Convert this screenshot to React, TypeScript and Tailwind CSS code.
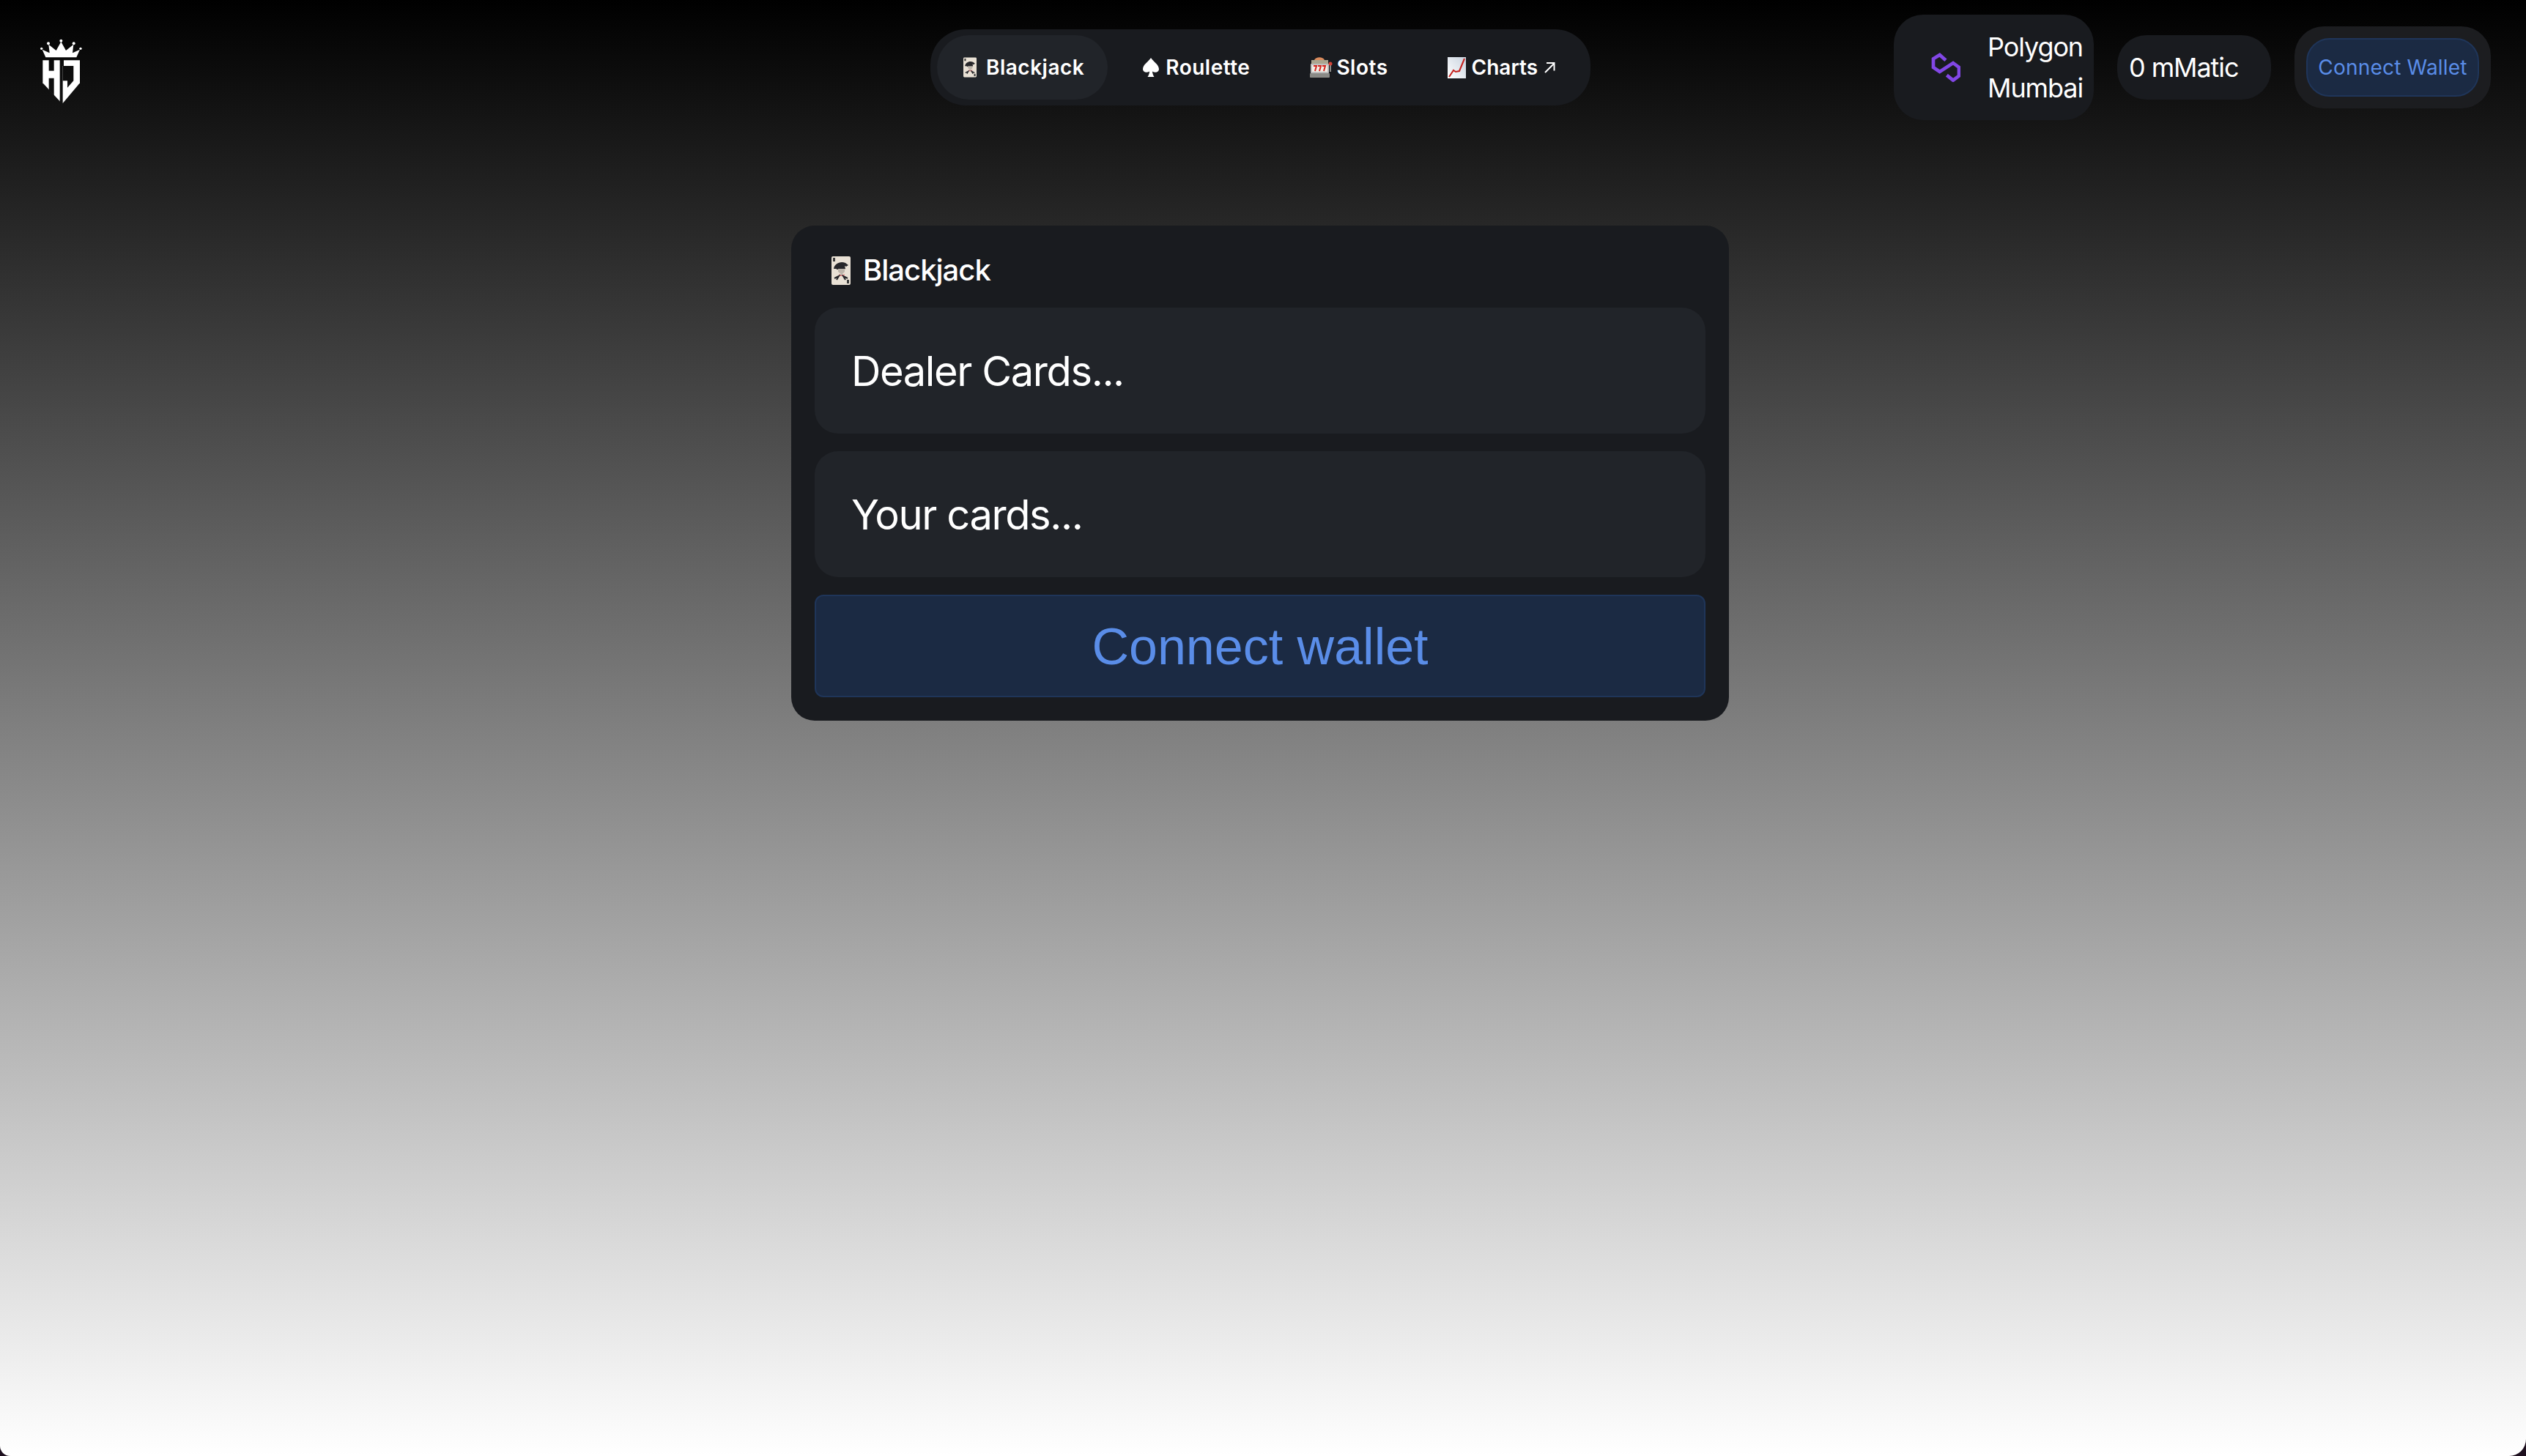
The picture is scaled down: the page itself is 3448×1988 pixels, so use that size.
const inter = "font-['Inter',sans-serif]";

function Logo() {
  return (
    <svg viewBox="0 0 225 315" className="w-[75px] h-[105px] mt-[10px] ml-[4px]">
      <mask id="hj">
        <polygon points="40,112 192,112 192,205 122,288 118,288 40,205" fill="white" />
        <rect x="65" y="108" width="21" height="47" fill="black" />
        <polygon points="65,185 86,185 86,256 65,234" fill="black" />
        <polygon points="110,108 126,108 126,135 122,135 122,295 110,295" fill="black" />
        <polygon points="122,135 166,135 166,196 141,224 141,196 122,196" fill="black" />
      </mask>
      <rect width="225" height="315" fill="white" mask="url(#hj)" />
      <polygon points="52,100 38,68 68,82 64,47 95,72 115,36 135,72 166,47 162,82 192,68 178,100" fill="white" />
      <circle cx="35" cy="64" r="5" fill="white" />
      <circle cx="63" cy="43" r="6" fill="white" />
      <circle cx="115" cy="32" r="6" fill="white" />
      <circle cx="167" cy="43" r="6" fill="white" />
      <circle cx="195" cy="64" r="5" fill="white" />
    </svg>
  );
}

function Joker({ className }: { className: string }) {
  return (
    <svg viewBox="0 0 26 39" className={className}>
      <rect width="26" height="39" rx="2" fill="#e9e1d5" />
      <path d="M2 2h3v5H2zM21 32h3v5h-3z" fill="#3a3a3a" />
      <path d="M3 17c1-7 9-11 16-8l4 3-3 2-2-1 1 4-2 1H8l-2-1z" fill="#26262a" />
      <path d="M9 17h9v4l-4 4-5-4z" fill="#bdb5ab" />
      <path d="M10 24l4 2 4-2-1 3h-6z" fill="#e5787a" />
      <path d="M4 30l6-3-3 5M22 30l-6-3 3 5" stroke="#26262a" strokeWidth="2" fill="none" />
    </svg>
  );
}

function Spade() {
  return (
    <svg viewBox="0 0 24 26" className="w-[24px] h-[26px] shrink-0">
      <path d="M12 0C9 5 1 9 1 15.500C1 19.500 6 21 10 18.500C10 21 9 23.500 7.500 26H16.500C15 23.500 14 21 14 18.500C18 21 23 19.500 23 15.500C23 9 15 5 12 0Z" fill="white" />
    </svg>
  );
}

function SlotMachine() {
  return (
    <svg viewBox="0 0 32 32" className="w-[32px] h-[32px] shrink-0">
      <path d="M7 6c2-5 12-5 14 0z" fill="#d98a5c" />
      <rect x="3" y="6" width="23" height="6" fill="#a9a58f" />
      <rect x="2" y="11" width="25" height="13" rx="1" fill="#bfbfbf" />
      <rect x="4" y="13" width="21" height="9" fill="#f3eee6" />
      <path d="M6 14h4l-2 7M12 14h4l-2 7M18 14h4l-2 7" stroke="#d3261f" strokeWidth="2" fill="none" />
      <rect x="1" y="24" width="27" height="6" rx="1" fill="#8a8a86" />
      <rect x="28" y="12" width="2" height="10" fill="#8a8a86" />
      <circle cx="29" cy="11" r="2.500" fill="#d3453a" />
    </svg>
  );
}

function ChartUp() {
  return (
    <svg viewBox="0 0 25 29" className="w-[25px] h-[29px] shrink-0 ml-[1px]">
      <defs>
        <linearGradient id="chartbg" x1="0" y1="1" x2="1" y2="0">
          <stop offset="0" stopColor="#ffffff" />
          <stop offset="1" stopColor="#c9d3df" />
        </linearGradient>
      </defs>
      <rect width="25" height="29" fill="url(#chartbg)" />
      <path d="M2 27L8 18L11 20L16 19L23 2" stroke="#c4201c" strokeWidth="2" fill="none" />
    </svg>
  );
}

function PolygonIcon() {
  return (
    <svg viewBox="45 35 120 120" className="w-[40px] h-[40px] shrink-0">
      <path
        d="M105 66L80 44L54 60V95L80 113L135 77L159 95V130L135 148L109 127"
        stroke="#8247e5"
        strokeWidth="14"
        fill="none"
      />
    </svg>
  );
}

function NavBar() {
  return (
    <nav className="flex items-center gap-[16px] h-[104px] pl-[9px] pr-[8px] rounded-[48px] bg-[#191b1f] text-[28px] font-semibold tracking-[0.5px] text-white">
      <a className="flex items-center h-[88px] pl-[36px] pr-[32px] rounded-[44px] bg-[#212429]">
        <Joker className="w-[18px] h-[28px] shrink-0 mr-[13px]" />
        Blackjack
      </a>
      <a className="flex items-center gap-[8px] h-[88px] pl-[31px] pr-[33px]">
        <Spade />
        Roulette
      </a>
      <a className="flex items-center gap-[5px] h-[88px] px-[32px]">
        <SlotMachine />
        Slots
      </a>
      <a className="flex items-center gap-[8px] h-[88px] pl-[32px] pr-[40px] tracking-normal">
        <ChartUp />
        Charts
        <svg viewBox="0 0 16 16" className="w-[16px] h-[16px]">
          <path d="M2 15L14 3M4 2H14.500V12.500" stroke="white" strokeWidth="2" fill="none" />
        </svg>
      </a>
    </nav>
  );
}

function WalletArea() {
  return (
    <div className="flex items-center justify-end gap-[32px] text-[36px] tracking-[-1.1px] text-white">
      <div className="flex items-center w-[273px] h-[144px] pl-[51px] gap-[37px] rounded-[40px] bg-[#191b1f] leading-[56px]">
        <PolygonIcon />
        <span>Polygon<br />Mumbai</span>
      </div>
      <div className="flex items-center w-[210px] h-[88px] pl-[16px] rounded-[40px] bg-[#191b1f]">0 mMatic</div>
      <div className="flex items-center justify-center w-[268px] h-[112px] rounded-[40px] bg-[#1c1d20]">
        <button className="w-[236px] h-[80px] rounded-[32px] border-2 border-[#1f3559] bg-[#1b2a43] text-[28px] font-normal tracking-[0.2px] text-[#5a8de8]">
          Connect Wallet
        </button>
      </div>
    </div>
  );
}

function CardRow({ text }: { text: string }) {
  return (
    <div className="flex items-center h-[172px] pl-[50px] pt-[2px] rounded-[32px] bg-[#212429] text-[56px] tracking-[-1.4px] text-white">
      {text}
    </div>
  );
}

export default function App() {
  return (
    <div className={`h-[1988px] overflow-hidden bg-[#1d0f1e] ${inter}`}>
      <div className="h-full rounded-bl-[14px] rounded-br-[23px] bg-[linear-gradient(to_bottom,#000,#fff)]">
        <div className="w-[3440px] h-full">
          <header className="grid grid-cols-[1fr_auto_1fr] items-center h-[144px] pt-[20px] box-content pl-[41px] pr-[40px]">
            <Logo />
            <NavBar />
            <WalletArea />
          </header>
          <main className="w-[1280px] mx-auto mt-[144px] px-[32px] pb-[32px] rounded-[32px] bg-[#191b1f]">
            <div className="flex items-center h-[112px] pt-[10px] pl-[23px] text-[40px] font-medium tracking-[-1px] text-white">
              <Joker className="w-[26px] h-[39px] shrink-0 mr-[17px]" />
              Blackjack
            </div>
            <div className="flex flex-col gap-[24px]">
              <CardRow text="Dealer Cards..." />
              <CardRow text="Your cards..." />
              <button className="h-[140px] pt-[2px] rounded-[12px] border-2 border-[#1f3559] bg-[#1b2a43] text-[70px] text-[#5a8de8] font-['Liberation_Sans',sans-serif]">
                Connect wallet
              </button>
            </div>
          </main>
        </div>
      </div>
    </div>
  );
}
